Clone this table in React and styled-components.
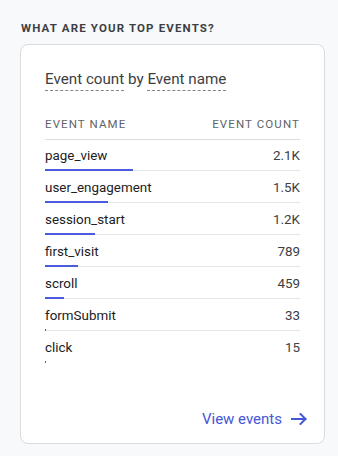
import React from "react";
import styled, { createGlobalStyle } from "styled-components";

const GlobalStyle = createGlobalStyle`
  html, body {
    margin: 0;
    padding: 0;
    background: #f8f9fa;
  }
  body {
    font-family: Roboto, "Liberation Sans", Arial, sans-serif;
    -webkit-font-smoothing: antialiased;
  }
`;

const Page = styled.div`
  padding: 20px 13px 13px 20px;
  display: flex;
  flex-direction: column;
  gap: 8px;
`;

const SectionTitle = styled.h2`
  margin: 0 0 0 1px;
  font-size: 11.5px;
  line-height: 16px;
  font-weight: 700;
  letter-spacing: 1.15px;
  color: #3c4043;
  text-transform: uppercase;
`;

const Card = styled.section`
  width: 305px;
  box-sizing: border-box;
  background: #fff;
  border: 1px solid #dadce0;
  border-radius: 8px;
  padding: 24px 24px 14px;
  display: flex;
  flex-direction: column;
`;

const ChartTitle = styled.div`
  font-size: 15.2px;
  line-height: 21px;
  color: #3c4043;
`;

const Dim = styled.span`
  padding-bottom: 2px;
  border-bottom: 1px dashed #80868b;
`;

const HeaderRow = styled.div`
  margin-top: 19px;
  height: 30px;
  display: flex;
  align-items: center;
  justify-content: space-between;
  border-bottom: 1px solid #dadce0;
  font-size: 11.5px;
  letter-spacing: 1.1px;
  color: #5f6368;
  text-transform: uppercase;
`;

const Row = styled.div`
  padding-top: 8px;
  padding-bottom: 1px;
`;

const RowLine = styled.div`
  display: flex;
  justify-content: space-between;
  align-items: center;
  font-size: 13.4px;
  line-height: 16px;
`;

const Label = styled.span`
  color: #202124;
`;

const Count = styled.span`
  color: #3c4043;
`;

const Track = styled.div`
  margin-top: 5px;
  height: 2px;
  background: ${(p) =>
    p.$last ? "transparent" : "linear-gradient(to top, #e3e5e8 1px, transparent 1px)"};
`;

const Fill = styled.div`
  height: 2px;
  background: #4a5be0;
`;

const Footer = styled.div`
  margin-top: 45px;
  margin-right: -7px;
  display: flex;
  justify-content: flex-end;
`;

const LinkButton = styled.a`
  display: inline-flex;
  align-items: center;
  gap: 9px;
  font-size: 15px;
  line-height: 20px;
  color: #4556d6;
  text-decoration: none;
  cursor: pointer;
`;

const events = [
  { name: "page_view", label: "2.1K", value: 2100 },
  { name: "user_engagement", label: "1.5K", value: 1500 },
  { name: "session_start", label: "1.2K", value: 1200 },
  { name: "first_visit", label: "789", value: 789 },
  { name: "scroll", label: "459", value: 459 },
  { name: "formSubmit", label: "33", value: 33 },
  { name: "click", label: "15", value: 15 },
];

const total = events.reduce((s, e) => s + e.value, 0);

const ArrowIcon = () => (
  <svg width="16" height="12" viewBox="0 0 16 12" fill="none">
    <path
      d="M0.5 6H14.5M9.5 1L14.5 6L9.5 11"
      stroke="currentColor"
      strokeWidth="2"
      strokeLinecap="square"
    />
  </svg>
);

export default function App() {
  return (
    <>
      <GlobalStyle />
      <Page>
        <SectionTitle>What are your top events?</SectionTitle>
        <Card>
          <ChartTitle>
            <Dim>Event count</Dim> by <Dim>Event name</Dim>
          </ChartTitle>
          <HeaderRow>
            <span>Event name</span>
            <span>Event count</span>
          </HeaderRow>
          {events.map((e, i) => (
            <Row key={e.name}>
              <RowLine>
                <Label>{e.name}</Label>
                <Count>{e.label}</Count>
              </RowLine>
              <Track $last={i === events.length - 1}>
                <Fill style={{ width: `${Math.max((e.value / total) * 100, 0.4)}%` }} />
              </Track>
            </Row>
          ))}
          <Footer>
            <LinkButton>
              View events
              <ArrowIcon />
            </LinkButton>
          </Footer>
        </Card>
      </Page>
    </>
  );
}
